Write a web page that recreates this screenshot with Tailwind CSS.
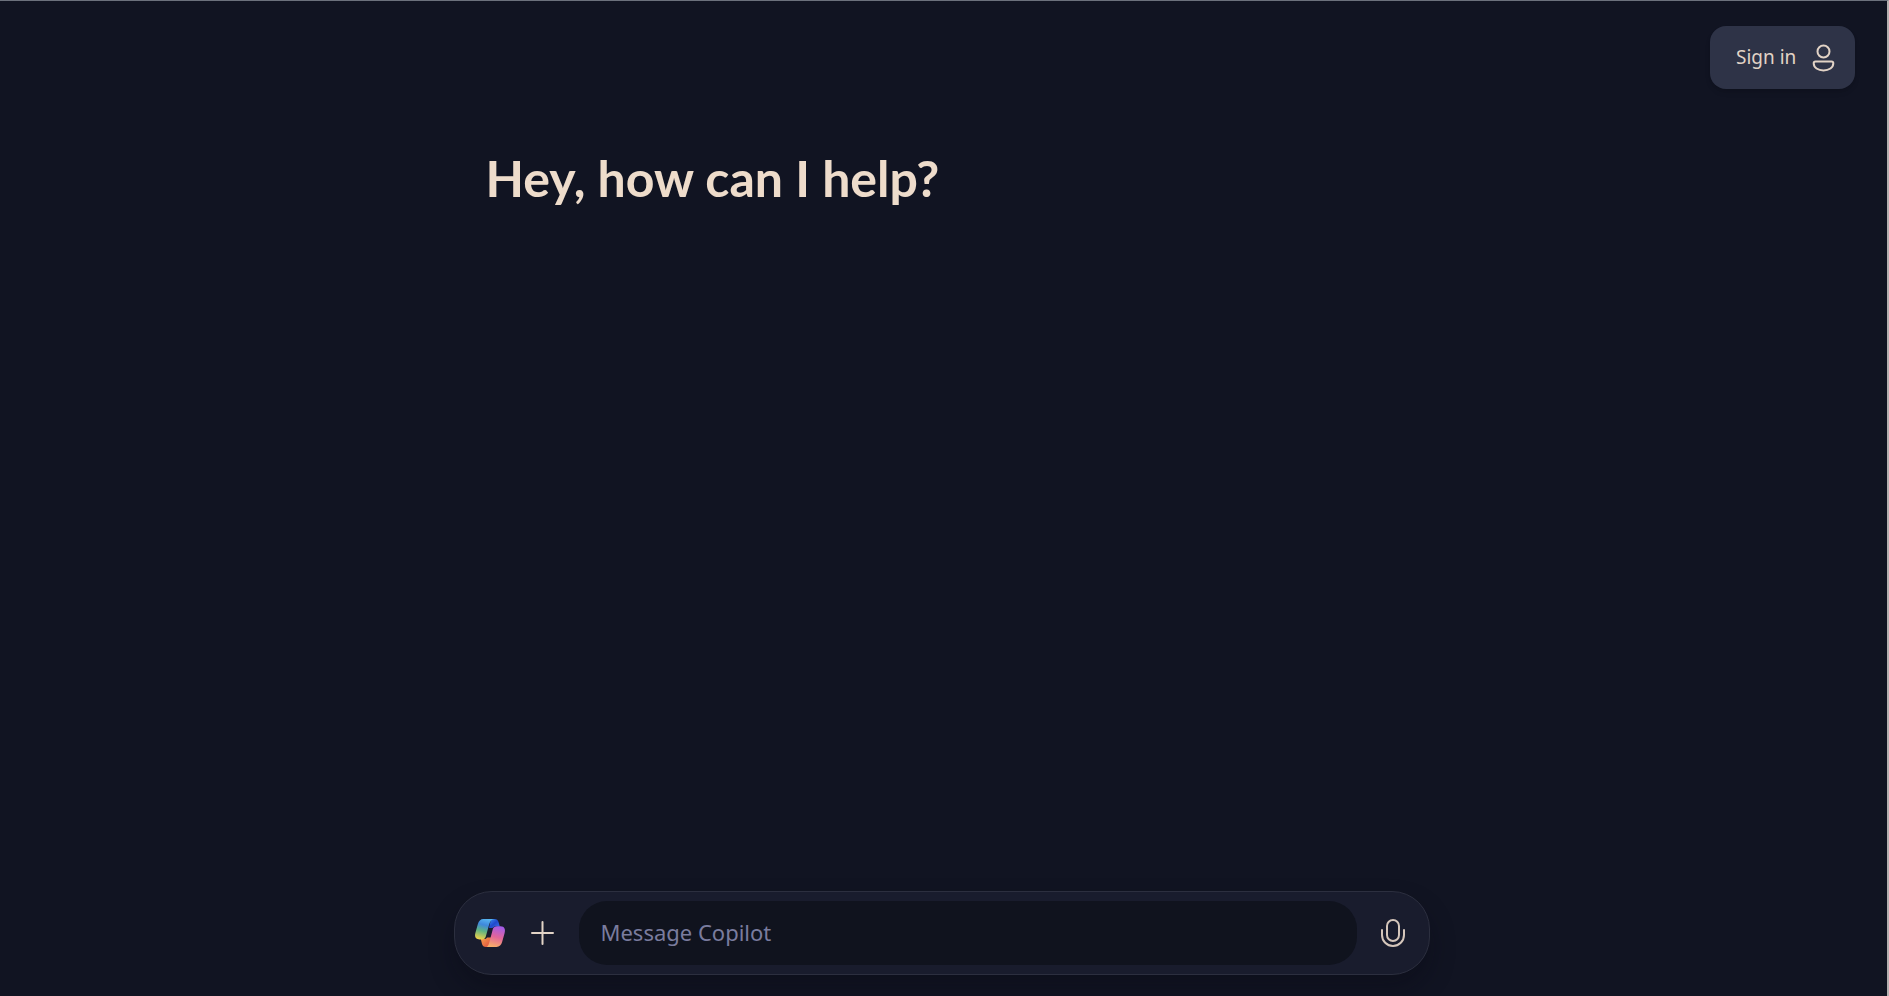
<!DOCTYPE html>
<html lang="en">
<head>
    <meta charset="UTF-8">
    <meta name="viewport" content="width=device-width, initial-scale=1.0">
    <title>Copilot</title>
    <script src="https://cdn.jsdelivr.net/npm/@tailwindcss/browser@4"></script>
</head>
<body class="min-h-screen flex flex-col bg-[#111422] border-t-1 border-t-[#6c717c] border-r-2 border-r-[#b4b0b0] font-['Noto_Sans','Open_Sans',sans-serif] text-[#eedccb]">

    <header class="flex justify-end pt-[25px] pr-8">
        <button type="button" class="h-[63px] w-[145px] flex items-center justify-between pl-[26px] pr-5 rounded-2xl bg-[#2e3347] shadow-md text-[19px] text-[#e2d3c6]">
            Sign in
            <svg class="w-6 h-8" viewBox="0 0 24 32" fill="none" stroke="currentColor" stroke-width="2" aria-hidden="true">
                <circle cx="12.500" cy="9.500" r="6"/>
                <path d="M4.500 19.500h16a1.800 1.800 0 0 1 1.800 1.800c0 4.400-4.300 7.200-9.800 7.200s-9.800-2.800-9.800-7.200A1.800 1.800 0 0 1 4.500 19.500z"/>
            </svg>
        </button>
    </header>

    <div class="flex-1 flex flex-col w-full pr-1">
        <div class="flex-1 flex flex-col w-full max-w-[976px] mx-auto">
            <main class="flex-1 px-8 pt-[59px]">
                <h1 class="font-['Lato',sans-serif] text-[50px] leading-[60px] font-bold">Hey, how can I help?</h1>
            </main>

            <!-- Message composer -->
            <form class="h-[84px] mb-[21px] flex items-center px-5 rounded-[38px] bg-[#191c2d] border border-[#2c2f3f] shadow-[0_14px_24px_0_rgba(8,10,20,0.35)]">
                <button type="button" aria-label="Copilot home" class="w-8 h-8 flex items-center justify-center">
                    <svg class="w-8 h-8" viewBox="1 0 32 32" aria-hidden="true">
                        <defs>
                            <linearGradient id="left" x1="0.6" y1="0" x2="0.35" y2="1">
                                <stop offset="0" stop-color="#56b4f0"/>
                                <stop offset="0.3" stop-color="#3f88dc"/>
                                <stop offset="0.6" stop-color="#5fb382"/>
                                <stop offset="1" stop-color="#ecd04a"/>
                            </linearGradient>
                            <linearGradient id="top" x1="0" y1="0" x2="1" y2="1">
                                <stop offset="0" stop-color="#3b8ff0"/>
                                <stop offset="0.5" stop-color="#1f49cc"/>
                                <stop offset="1" stop-color="#3f74e8"/>
                            </linearGradient>
                            <linearGradient id="right" x1="0.6" y1="0" x2="0.35" y2="1">
                                <stop offset="0" stop-color="#a45ce8"/>
                                <stop offset="0.5" stop-color="#e2659a"/>
                                <stop offset="1" stop-color="#f8b068"/>
                            </linearGradient>
                            <linearGradient id="bottom" x1="0" y1="0" x2="1" y2="1">
                                <stop offset="0" stop-color="#f7a04a"/>
                                <stop offset="1" stop-color="#dc4a3d"/>
                            </linearGradient>
                        </defs>
                        <path fill="url(#top)" d="M17 2h3.500c2.300 0 3.400 1 4 3l1.300 4.500H22c-2 0-3 .6-3.600 1.500H15z"/>
                        <path fill="url(#bottom)" d="M15.500 30H12c-2.300 0-3.400-1-4-3L6.800 22H10c2 0 2.600-.6 3.200-1.500h4z"/>
                        <path fill="url(#left)" d="M20.500 2H9.500C6.500 2 4.800 4 3.800 7.200L1.500 15.500C.3 19.500 1.300 22.500 5.500 22.500H8c2 0 3.200-1 3.800-3l3.200-11.500c1-4 2.500-6 5.500-6z"/>
                        <path fill="url(#right)" d="M12 30h10.500c3 0 4.700-2 5.700-5.200l2.300-8.300c1.200-4 .2-7.300-4-7.300H23.500c-2.600 0-4 .8-4.700 3L15.800 23.500c-.9 3.800-1.800 6.500-3.800 6.500z"/>
                    </svg>
                </button>
                <button type="button" aria-label="Add attachment" class="ml-5 w-8 h-8 flex items-center justify-center text-[#e2d3c6]">
                    <svg class="w-6 h-6" viewBox="1 0 24 24" fill="none" stroke="currentColor" stroke-width="2" stroke-linecap="round" aria-hidden="true">
                        <path d="M12.500 1v22M2 12h21"/>
                    </svg>
                </button>
                <input id="message" type="text" aria-label="Message Copilot" placeholder="Message Copilot" class="ml-5 flex-1 min-w-0 h-16 px-[22px] pb-0.5 rounded-[28px] bg-[#10131e] text-[22px] outline-none placeholder:text-[#7a7c9e]">
                <button type="button" aria-label="Talk to Copilot" class="ml-5 w-8 h-8 flex items-center justify-center text-[#d5c6bb]">
                    <svg class="w-8 h-8" viewBox="0 0 32 32" fill="none" stroke="currentColor" stroke-width="2" stroke-linecap="round" aria-hidden="true">
                        <rect x="10" y="3" width="12" height="21" rx="6"/>
                        <path d="M5 13v5a11 11 0 0 0 22 0v-5"/>
                    </svg>
                </button>
            </form>
        </div>
    </div>

</body>
</html>
